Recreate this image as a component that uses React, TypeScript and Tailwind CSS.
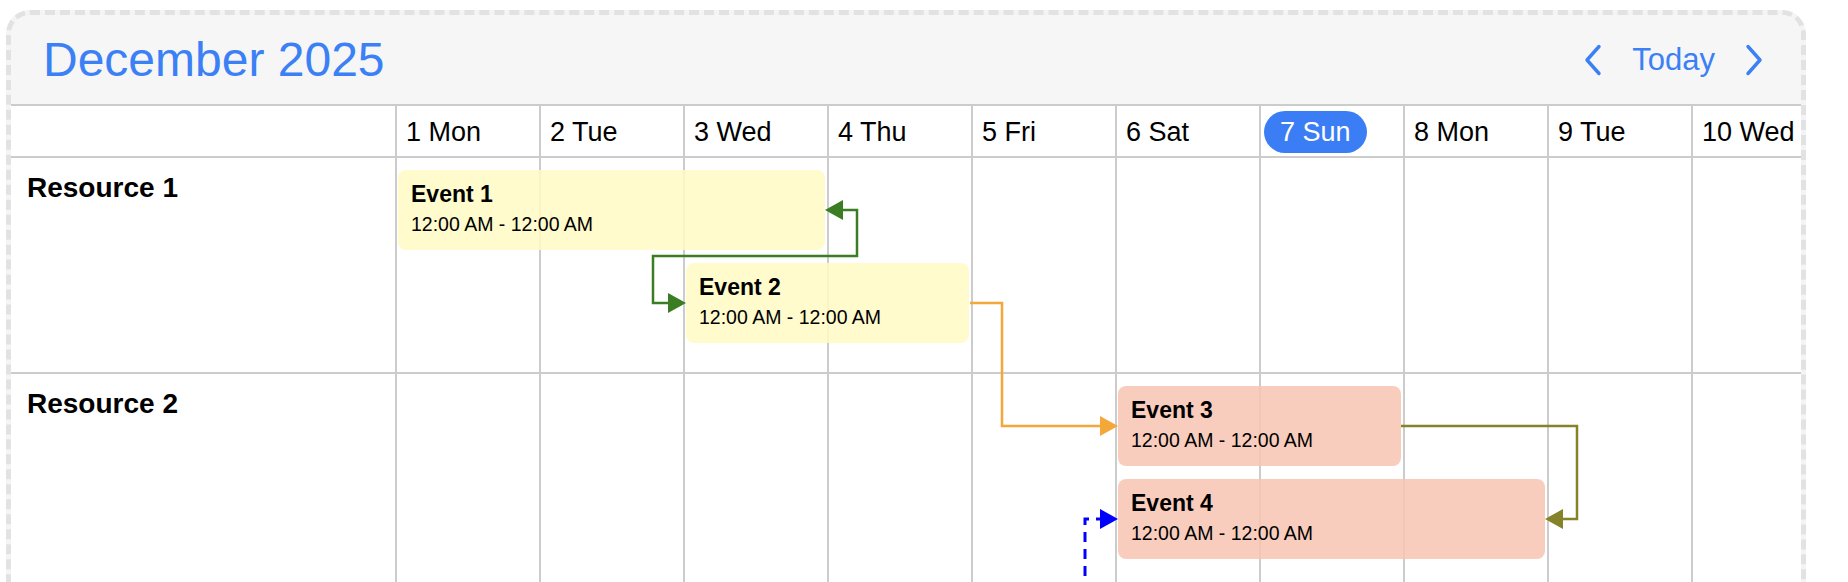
import React from 'react';

const COL_WIDTH = 144;
const LANE_PITCH = 93;

const days = ['1 Mon', '2 Tue', '3 Wed', '4 Thu', '5 Fri', '6 Sat', '7 Sun', '8 Mon', '9 Tue', '10 Wed'];
const todayIndex = 6;

interface Resource {
  id: string;
  name: string;
  top: number;
  height: number;
}

interface SchedulerEvent {
  id: string;
  title: string;
  time: string;
  resource: string;
  start: number;
  span: number;
  lane: number;
  tone: 'yellow' | 'salmon';
}

type Point = [number, number];

interface Link {
  id: string;
  color: string;
  points: Point[];
  heads: { tip: Point; dir: 'left' | 'right' }[];
  dashed?: boolean;
  width?: number;
}

const resources: Resource[] = [
  { id: 'r1', name: 'Resource 1', top: 0, height: 216 },
  { id: 'r2', name: 'Resource 2', top: 216, height: 300 },
];

const events: SchedulerEvent[] = [
  { id: 'e1', title: 'Event 1', time: '12:00 AM - 12:00 AM', resource: 'r1', start: 0, span: 3, lane: 0, tone: 'yellow' },
  { id: 'e2', title: 'Event 2', time: '12:00 AM - 12:00 AM', resource: 'r1', start: 2, span: 2, lane: 1, tone: 'yellow' },
  { id: 'e3', title: 'Event 3', time: '12:00 AM - 12:00 AM', resource: 'r2', start: 5, span: 2, lane: 0, tone: 'salmon' },
  { id: 'e4', title: 'Event 4', time: '12:00 AM - 12:00 AM', resource: 'r2', start: 5, span: 3, lane: 1, tone: 'salmon' },
];

// dependency lines, in timeline coordinates
const links: Link[] = [
  {
    id: 'l1',
    color: '#3b7d23',
    points: [[446, 52], [462, 52], [462, 98], [258, 98], [258, 145], [275, 145]],
    heads: [{ tip: [430, 52], dir: 'left' }, { tip: [291, 145], dir: 'right' }],
  },
  {
    id: 'l2',
    color: '#f4a83a',
    points: [[575, 145], [607, 145], [607, 268], [707, 268]],
    heads: [{ tip: [723, 268], dir: 'right' }],
  },
  {
    id: 'l3',
    color: '#84832a',
    points: [[1006, 268], [1182, 268], [1182, 361], [1166, 361]],
    heads: [{ tip: [1150, 361], dir: 'left' }],
  },
  {
    id: 'l4',
    color: '#0000ff',
    points: [[690, 520], [690, 361], [707, 361]],
    heads: [{ tip: [723, 361], dir: 'right' }],
    dashed: true,
    width: 3,
  },
];

const toneClass = {
  yellow: 'bg-[rgba(255,250,195,0.85)]',
  salmon: 'bg-[rgba(248,196,178,0.85)]',
};

const arrowHead = (tip: Point, dir: 'left' | 'right') => {
  const [x, y] = tip;
  const bx = dir === 'right' ? x - 18 : x + 18;
  return `${x},${y} ${bx},${y - 10} ${bx},${y + 10}`;
};

const Chevron = ({ dir }: { dir: 'left' | 'right' }) => (
  <svg width="18" height="32" viewBox="0 0 18 32" fill="none">
    <path
      d={dir === 'left' ? 'M15 2.5 L3 16 L15 29.5' : 'M3 2.5 L15 16 L3 29.5'}
      stroke="#3b80f5"
      strokeWidth="3.4"
      strokeLinecap="round"
      strokeLinejoin="round"
    />
  </svg>
);

export default function App() {
  return (
    <div className="min-h-screen bg-white pl-[6px] pt-[10px] font-['Liberation_Sans',Arial,sans-serif] text-black">
      <div className="w-[1800px] overflow-hidden rounded-[24px] border-[5px] border-dashed border-[#e2e2e2] bg-[#f4f4f8]">
        {/* toolbar */}
        <div className="flex h-[91px] items-center justify-between border-b-2 border-[#cccccc] bg-[#f6f6f6] pl-[32px] pr-[38px]">
          <h1 className="text-[48px] leading-none text-[#3b80f5]">December 2025</h1>
          <div className="flex items-center gap-[30px]">
            <Chevron dir="left" />
            <span className="text-[31px] leading-none text-[#3b80f5]">Today</span>
            <Chevron dir="right" />
          </div>
        </div>

        {/* day header */}
        <div className="flex h-[52px] overflow-hidden border-b-2 border-[#cccccc] bg-white">
          <div className="w-[384px] shrink-0" />
          {days.map((day, i) => (
            <div key={day} className="flex w-[144px] shrink-0 items-center border-l-2 border-[#cccccc] pl-[3px] pt-[1px]">
              {i === todayIndex ? (
                <span className="rounded-full bg-[#3b7df4] px-[16px] py-[5px] text-[27px] leading-[32px] text-white">{day}</span>
              ) : (
                <span className="whitespace-nowrap px-[6px] text-[27px] leading-[32px]">{day}</span>
              )}
            </div>
          ))}
        </div>

        {/* body */}
        <div className="relative overflow-hidden bg-white">
          {resources.map((res, r) => (
            <div
              key={res.id}
              className={`flex ${r === 0 ? 'h-[216px] border-b-2 border-[#cccccc]' : 'h-[300px]'}`}
            >
              <div className="w-[384px] shrink-0 pl-[16px] pt-[14px] text-[28px] font-bold leading-[32px]">{res.name}</div>
              {days.map((day) => (
                <div key={day} className="w-[144px] shrink-0 border-l-2 border-[#cccccc]" />
              ))}
            </div>
          ))}

          <div className="pointer-events-none absolute left-[384px] top-0 h-full w-[1440px]">
            {events.map((ev) => {
              const res = resources.find((r) => r.id === ev.resource)!;
              return (
                <div
                  key={ev.id}
                  className={`absolute h-[80px] rounded-[8px] px-[13px] pt-[11px] ${toneClass[ev.tone]}`}
                  style={{
                    left: ev.start * COL_WIDTH + 3,
                    width: ev.span * COL_WIDTH - 5,
                    top: res.top + 12 + ev.lane * LANE_PITCH,
                  }}
                >
                  <div className="text-[23px] font-bold leading-[27px]">{ev.title}</div>
                  <div className="mt-[4px] whitespace-nowrap text-[19.5px] leading-[24px]">{ev.time}</div>
                </div>
              );
            })}

            <svg className="absolute left-0 top-0 overflow-visible" width="1440" height="520">
              {links.map((link) => (
                <g key={link.id}>
                  <polyline
                    points={link.points.map((p) => p.join(',')).join(' ')}
                    fill="none"
                    stroke={link.color}
                    strokeWidth={link.width ?? 2.5}
                    strokeDasharray={link.dashed ? '10 7' : undefined}
                  />
                  {link.heads.map((h, i) => (
                    <polygon key={i} points={arrowHead(h.tip, h.dir)} fill={link.color} />
                  ))}
                </g>
              ))}
            </svg>
          </div>
        </div>
      </div>
    </div>
  );
}
